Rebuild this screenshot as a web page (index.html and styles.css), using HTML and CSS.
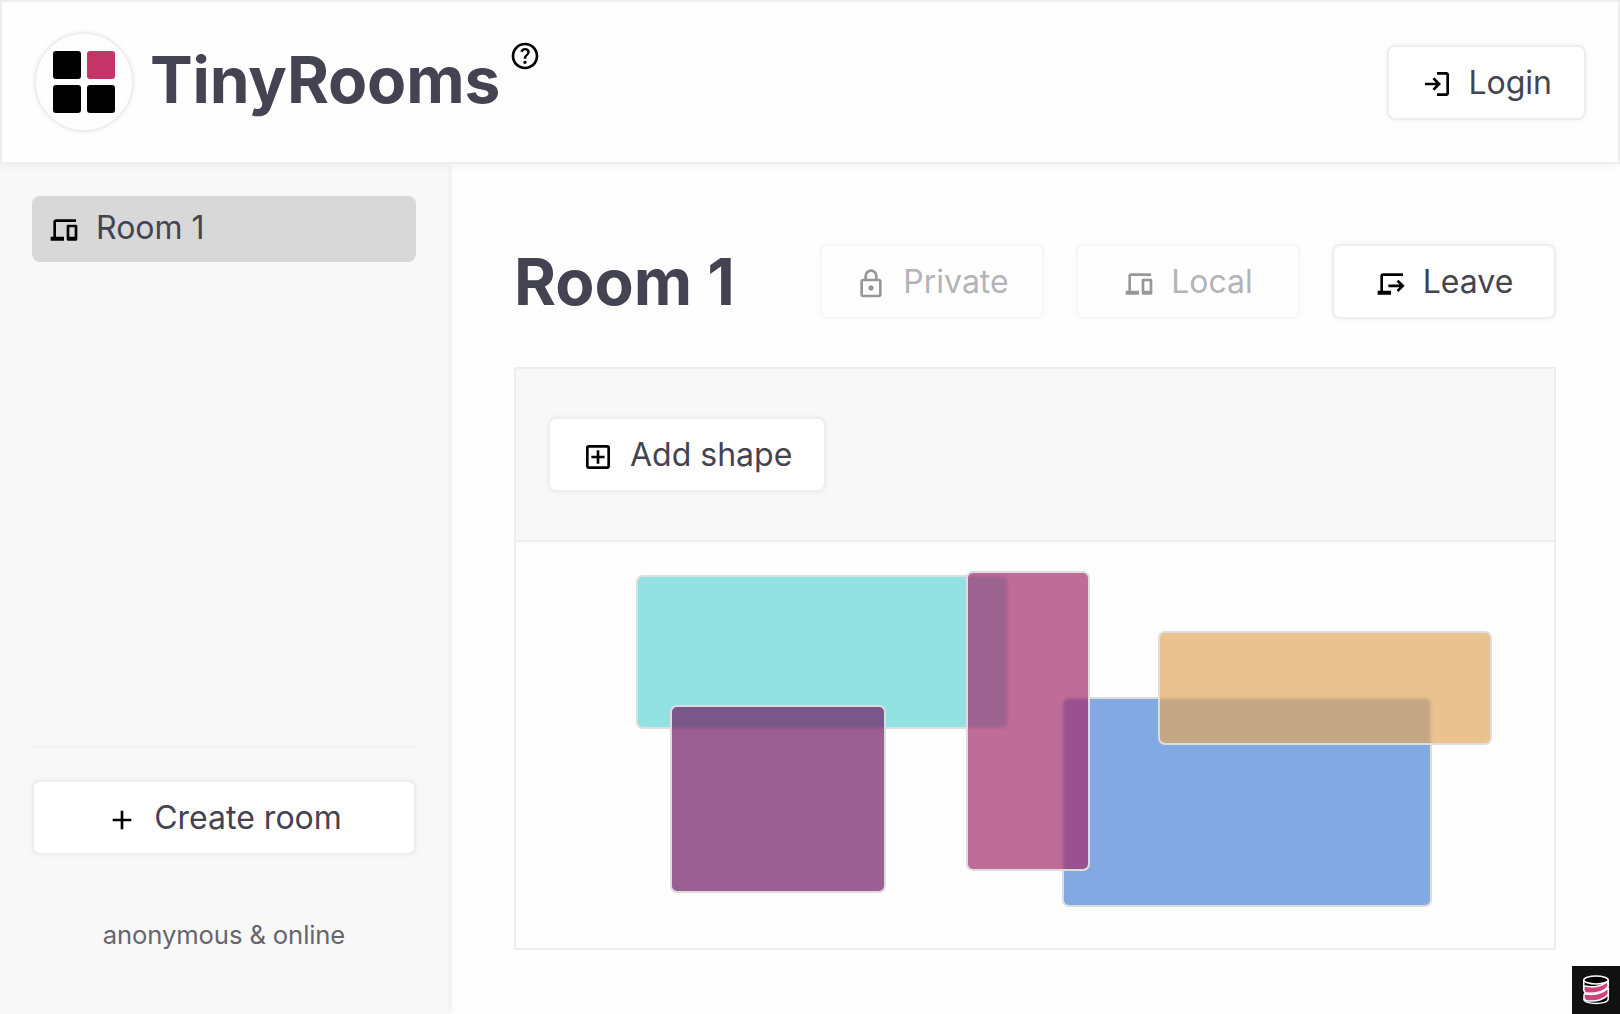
FILE: index.html
```html
<!DOCTYPE html>
<html lang="en">
<head>
<meta charset="utf-8">
<title>TinyRooms</title>
<link rel="stylesheet" href="styles.css">
</head>
<body>
<header class="header">
  <div class="logo"><i class="tile"></i><i class="tile accent"></i><i class="tile"></i><i class="tile"></i></div>
  <h1 class="brand">TinyRooms</h1>
  <svg class="icon help" viewBox="0 -960 960 960"><path d="M478-240q21 0 35.5-14.5T528-290q0-21-14.5-35.5T478-340q-21 0-35.5 14.5T428-290q0 21 14.5 35.5T478-240Zm-36-154h74q0-33 7.5-52t42.5-52q26-26 41-49.5t15-56.5q0-56-41-86t-97-30q-57 0-92.5 30T342-618l66 26q5-18 22.5-39t53.5-21q32 0 48 17.5t16 38.5q0 20-12 37.5T506-526q-44 39-54 59t-10 73Zm38 314q-83 0-156-31.5T197-197q-54-54-85.5-127T80-480q0-83 31.5-156T197-763q54-54 127-85.5T480-880q83 0 156 31.5T763-763q54 54 85.5 127T880-480q0 83-31.5 156T763-197q-54 54-127 85.5T480-80Zm0-80q134 0 227-93t93-227q0-134-93-227t-227-93q-134 0-227 93t-93 227q0 134 93 227t227 93Z"/></svg>
  <button class="button login"><svg class="icon" viewBox="0 -960 960 960"><path d="M480-120v-80h280v-560H480v-80h280q33 0 56.5 23.5T840-760v560q0 33-23.5 56.5T760-120H480Zm-80-160-55-58 102-102H120v-80h327L345-622l55-58 200 200-200 200Z"/></svg><span>Login</span></button>
</header>
<div class="body">
  <aside class="sidebar">
    <div class="rooms">
      <a class="room"><svg class="icon" viewBox="0 -960 960 960"><path d="M80-160v-120h80v-440q0-33 23.5-56.5T240-800h600v80H240v440h240v120H80Zm520 0q-17 0-28.5-11.5T560-200v-400q0-17 11.5-28.5T600-640h240q17 0 28.5 11.5T880-600v400q0 17-11.5 28.5T840-160H600Zm40-120h160v-280H640v280Z"/></svg><span>Room 1</span></a>
    </div>
    <div class="create">
      <button class="button"><svg class="icon" viewBox="0 -960 960 960"><path d="M440-440H200v-80h240v-240h80v240h240v80H520v240h-80v-240Z"/></svg><span>Create room</span></button>
    </div>
    <p class="status">anonymous &amp; online</p>
  </aside>
  <main class="main">
    <div class="title-row">
      <h1 class="title">Room 1</h1>
      <button class="button" disabled><svg class="icon" viewBox="0 -960 960 960"><path d="M240-80q-33 0-56.5-23.5T160-160v-400q0-33 23.5-56.5T240-640h40v-80q0-83 58.5-141.5T480-920q83 0 141.5 58.5T680-720v80h40q33 0 56.5 23.5T800-560v400q0 33-23.5 56.5T720-80H240Zm0-80h480v-400H240v400Zm240-120q33 0 56.5-23.5T560-360q0-33-23.5-56.5T480-440q-33 0-56.5 23.5T400-360q0 33 23.5 56.5T480-280ZM360-640h240v-80q0-50-35-85t-85-35q-50 0-85 35t-35 85v80Z"/></svg><span>Private</span></button>
      <button class="button" disabled><svg class="icon" viewBox="0 -960 960 960"><path d="M80-160v-120h80v-440q0-33 23.5-56.5T240-800h600v80H240v440h240v120H80Zm520 0q-17 0-28.5-11.5T560-200v-400q0-17 11.5-28.5T600-640h240q17 0 28.5 11.5T880-600v400q0 17-11.5 28.5T840-160H600Zm40-120h160v-280H640v280Z"/></svg><span>Local</span></button>
      <button class="button"><svg class="icon" viewBox="0 -960 960 960"><path d="M80-160v-120h80v-440q0-33 23.5-56.5T240-800h600v80H240v440h240v120H80Zm624-80-57-57 87-87H400v-80h334l-87-87 57-57 184 184-184 184Z"/></svg><span>Leave</span></button>
    </div>
    <section class="board">
      <div class="toolbar">
        <button class="button"><svg class="icon" viewBox="0 -960 960 960"><path d="M440-280h80v-160h160v-80H520v-160h-80v160H280v80h160v160ZM200-120q-33 0-56.5-23.5T120-200v-560q0-33 23.5-56.5T200-840h560q33 0 56.5 23.5T840-760v560q0 33-23.5 56.5T760-120H200Zm0-80h560v-560H200v560Z"/></svg><span>Add shape</span></button>
      </div>
      <div class="canvas">
        <div class="shape cyan"></div>
        <div class="shape purple"></div>
        <div class="shape blue"></div>
        <div class="shape pink"></div>
        <div class="shape orange"></div>
      </div>
    </section>
  </main>
</div>
<div class="inspector">
  <svg viewBox="0 0 48 48" stroke="#fff" stroke-width="1.5" stroke-linejoin="round">
    <path d="M11.8 33c0 6 24.400 6 24.400 0v-6c-4 5-14 7-24.400 6z" fill="#000"/>
    <path d="M11.800 21V14h24.400v6c-7 3-17 4-24.400 1z" fill="#000"/>
    <path d="M12.500 27.500c-1 3-1 5.500 1.500 7 11 2 19.500-2 22.300-6.500v-6c-5 5-14 8-23.800 5.500z" fill="#d0417b"/>
    <path d="M12.500 20c-1 2-1 5 1 6.800 10 2 19.500-2 22.500-6.300.5-2 0-3.500-1.500-4.500-4 4-13 6-22 4z" fill="#d0417b"/>
    <ellipse cx="24" cy="14" rx="12.200" ry="3.900" fill="#000"/>
  </svg>
</div>
</body>
</html>
```
FILE: styles.css
```css
* { box-sizing: border-box; }
body {
  margin: 0;
  height: 1014px;
  display: flex;
  flex-direction: column;
  overflow: hidden;
  background: #fefefe;
  color: #444352;
  font: 32px/1.2 Inter, "Liberation Sans", sans-serif;
}
h1, p { margin: 0; }
h1 { font-size: 64px; font-weight: 700; line-height: 76px; }
.icon { width: 32px; height: 32px; flex: none; fill: #000; position: relative; top: 2px; }
.header {
  position: relative;
  z-index: 2;
  height: 164px;
  flex: none;
  display: flex;
  align-items: center;
  padding: 0 32px;
  background: #fefefe;
  border: 2px solid #eee;
  box-shadow: 0 2px 8px rgba(0, 0, 0, .05);
}
.logo {
  width: 100px;
  height: 100px;
  display: grid;
  grid-template-columns: 28.5px 28.5px;
  grid-auto-rows: 28.5px;
  gap: 5.5px;
  place-content: center;
  border: 2px solid #eee;
  border-radius: 50%;
  box-shadow: 0 0 5px rgba(0, 0, 0, .06);
}
.tile { background: #000; border-radius: 3px; }
.tile.accent { background: #c53467; }
.brand { margin: 0 0 4px 16px; letter-spacing: -.15px; }
.help { align-self: flex-start; margin: 36px 0 0 9px; }
.button {
  height: 75px;
  display: flex;
  align-items: center;
  justify-content: center;
  gap: 16px;
  padding: 2px 32px 0;
  font: inherit;
  color: inherit;
  background: #fff;
  border: 2px solid #eee;
  border-radius: 8px;
  box-shadow: 0 0 5px rgba(0, 0, 0, .06);
}
.button .icon { top: 1px; }
.button:disabled { opacity: .4; }
.login { margin-left: auto; gap: 15px; }
.body { flex: 1; min-height: 0; display: flex; }
.sidebar {
  width: 449px;
  flex: none;
  display: flex;
  flex-direction: column;
  padding: 32px 33px 0 32px;
  background: #f8f8f8;
  box-shadow: 0 0 6px rgba(0, 0, 0, .12);
}
.rooms { flex: 1; }
.room {
  height: 66px;
  display: flex;
  align-items: center;
  gap: 16px;
  padding: 0 16px 2px;
  background: #d8d8d8;
  border-radius: 8px;
}
.create { border-top: 2px solid #f2f2f2; padding-top: 32px; }
.create .button { width: 100%; }
.status { margin: 63px 0; height: 33px; line-height: 33px; font-size: 25.6px; letter-spacing: -.1px; text-align: center; color: #66656d; }
.main { flex: 1; padding: 80px 64px 64px 65px; display: flex; flex-direction: column; }
.title-row { display: flex; gap: 32px; height: 75px; align-items: center; margin-bottom: 48px; }
.title { margin-right: auto; }
.title-row .button { width: 224px; }
.board { flex: 1; border: 2px solid #eee; display: flex; flex-direction: column; }
.toolbar { height: 173px; display: flex; align-items: center; padding: 0 32px; background: #f8f8f8; border-bottom: 2px solid #eee; }
.canvas { flex: 1; position: relative; }
.shape { position: absolute; border: 2px solid #ddd; border-radius: 7px; backdrop-filter: blur(1px); }
.cyan { left: 120px; top: 33px; width: 372px; height: 154px; background: rgba(100, 213, 216, .7); }
.purple { left: 154px; top: 163px; width: 216px; height: 188px; background: rgba(111, 28, 99, .7); }
.blue { left: 546px; top: 155px; width: 370px; height: 210px; background: rgba(78, 132, 214, .7); }
.pink { left: 450px; top: 29px; width: 124px; height: 300px; background: rgba(163, 46, 108, .7); }
.orange { left: 642px; top: 89px; width: 334px; height: 114px; background: rgba(224, 168, 96, .7); }
.inspector { position: fixed; right: 0; bottom: 0; width: 48px; height: 48px; background: #111; z-index: 3; }
.inspector svg { display: block; }
```
